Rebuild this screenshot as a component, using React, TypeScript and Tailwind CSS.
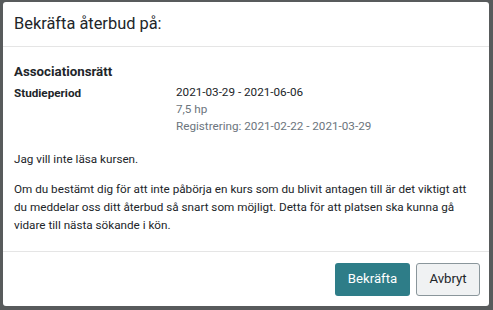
export default function App() {
  return (
    <div
      className="w-[493px] h-[310px] bg-[#585b5c] pt-[2px] pl-[3px] pr-[4px] pb-[4px]"
      style={{ fontFamily: 'Roboto, "Noto Sans", sans-serif' }}
    >
      <div className="flex flex-col h-full bg-white rounded-[3px] text-[#212529]">
        {/* Header */}
        <div className="h-[45px] flex items-center px-[11px] border-b border-[#e5e5e5]">
          <h2 className="text-[16.4px] leading-none">Bekräfta återbud på:</h2>
        </div>

        {/* Body */}
        <div className="flex-1 px-[11px] pt-[15px] text-[11.7px]">
          <h3 className="font-bold text-[13.3px] leading-[20px]">Associationsrätt</h3>
          <div className="flex mt-[2px]">
            <div className="w-[162px] font-bold leading-[18px]">Studieperiod</div>
            <div className="leading-[17px]">
              <div>2021-03-29 - 2021-06-06</div>
              <div className="text-[#6c757d]">7,5 hp</div>
              <div className="text-[#6c757d]">Registrering: 2021-02-22 - 2021-03-29</div>
            </div>
          </div>
          <p className="mt-[15px] leading-[18px]">Jag vill inte läsa kursen.</p>
          <p className="mt-[12px] leading-[18px] pr-[6px]">
            Om du bestämt dig för att inte påbörja en kurs som du blivit antagen till är det viktigt att
            du meddelar oss ditt återbud så snart som möjligt. Detta för att platsen ska kunna gå
            vidare till nästa sökande i kön.
          </p>
        </div>

        {/* Footer */}
        <div className="h-[55px] flex items-center justify-end gap-[6px] pl-[9px] pr-[9px] border-t border-[#e5e5e5]">
          <button className="h-[33px] w-[75px] rounded-[3px] bg-[#2e7d88] text-white text-[13.2px]">
            Bekräfta
          </button>
          <button className="h-[33px] w-[64px] rounded-[3px] bg-[#f0f2f3] border border-[#8a969b] text-[#212529] text-[13.2px]">
            Avbryt
          </button>
        </div>
      </div>
    </div>
  )
}
